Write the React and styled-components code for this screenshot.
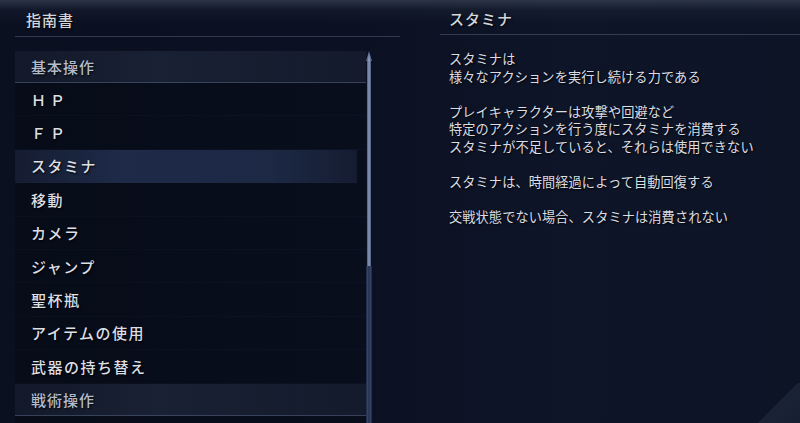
import React from "react";
import styled, { createGlobalStyle } from "styled-components";

const Global = createGlobalStyle`
  html, body { margin: 0; padding: 0; background: #0b1120; }
  body { font-family: "Noto Sans CJK JP", "Noto Sans", sans-serif; }
`;

const Screen = styled.div`
  position: relative;
  width: 800px;
  height: 423px;
  overflow: hidden;
  display: flex;
  background:
    linear-gradient(180deg, rgba(70,80,100,0.55) 0px, rgba(40,48,66,0.25) 10px, rgba(0,0,0,0) 24px),
    linear-gradient(90deg, #0a1020 0%, #0b1122 45%, #0e1528 70%, #0d1426 100%);
  color: #d6d9de;
  text-shadow: 1px 1px 2px rgba(0,0,0,0.9);
`;

const LeftPanel = styled.div`
  width: 400px;
  display: flex;
  flex-direction: column;
`;

const PanelTitle = styled.div`
  height: ${p => p.$h}px;
  margin-left: ${p => p.$ml}px;
  padding-left: ${p => p.$pl}px;
  box-sizing: border-box;
  display: flex;
  align-items: center;
  font-size: 15px;
  font-weight: 500;
  letter-spacing: 1px;
  color: #d2d5da;
  border-bottom: 1px solid rgba(90,100,125,0.5);
  padding-top: 2px;
`;

const ListArea = styled.div`
  display: flex;
  margin-top: 14px;
  flex: 1;
`;

const List = styled.div`
  margin-left: 15px;
  width: 351px;
  display: flex;
  flex-direction: column;
  background: linear-gradient(90deg, rgba(5,9,20,0.6), rgba(6,10,22,0.4));
`;

const Header = styled.div`
  height: ${p => p.$h}px;
  box-sizing: border-box;
  display: flex;
  align-items: center;
  padding-left: 16px;
  font-size: 15px;
  font-weight: 500;
  letter-spacing: 1px;
  color: #b4bccb;
  background: linear-gradient(90deg, rgba(30,38,58,0.5) 0%, rgba(28,36,56,0.85) 40%, rgba(24,32,50,0.7) 100%);
  border-bottom: 1px solid rgba(70,82,110,0.7);
`;

const Row = styled.div`
  height: 33.4px;
  box-sizing: border-box;
  display: flex;
  align-items: center;
  padding-left: 16px;
  margin-right: ${p => (p.$active ? 9 : 0)}px;
  font-size: 15px;
  font-weight: 500;
  letter-spacing: ${p => (p.$wide ? 4 : 1.5)}px;
  color: #dcdfe4;
  border-bottom: 1px solid rgba(40,48,68,0.12);
  background: ${p =>
    p.$active
      ? "linear-gradient(90deg, rgba(22,30,52,0.9) 0%, rgba(30,42,72,1) 30%, rgba(28,40,68,1) 75%, rgba(22,30,52,0.9) 100%)"
      : "transparent"};
`;

const Scroll = styled.div`
  width: 6px;
  display: flex;
  flex-direction: column;
  align-items: center;
`;

const ScrollArrow = styled.svg`
  display: block;
  width: 6px;
  height: 10px;
`;

const Thumb = styled.div`
  width: 4px;
  height: 205px;
  background: linear-gradient(90deg, #4a5a7c 0%, #8a9ab8 50%, #4a5a7c 100%);
`;

const Track = styled.div`
  width: 6px;
  flex: 1;
  background: linear-gradient(90deg, #1a2540 0%, #3a4a6c 30%, #1e2a46 50%, #3a4a6c 70%, #1a2540 100%);
`;

const RightPanel = styled.div`
  flex: 1;
  padding-left: 40px;
  display: flex;
  flex-direction: column;
`;

const Body = styled.div`
  padding-left: 9px;
  padding-top: 15px;
  font-size: 13.2px;
  line-height: 17.6px;
  color: #dadde2;
  letter-spacing: 0.1px;
`;

const Para = styled.p`
  margin: 0 0 17.6px 0;
`;

const Corner = styled.div`
  position: absolute;
  right: 0;
  bottom: 0;
  width: 46px;
  height: 40px;
  background: linear-gradient(135deg, rgba(0,0,0,0) 50%, rgba(50,60,82,0.35) 52%, rgba(45,55,78,0.3) 100%);
  pointer-events: none;
`;

const items = ["ＨＰ", "ＦＰ", "スタミナ", "移動", "カメラ", "ジャンプ", "聖杯瓶", "アイテムの使用", "武器の持ち替え"];

const paras = [
  ["スタミナは", "様々なアクションを実行し続ける力である"],
  ["プレイキャラクターは攻撃や回避など", "特定のアクションを行う度にスタミナを消費する", "スタミナが不足していると、それらは使用できない"],
  ["スタミナは、時間経過によって自動回復する"],
  ["交戦状態でない場合、スタミナは消費されない"],
];

export default function App() {
  return (
    <Screen>
      <Global />
      <LeftPanel>
        <PanelTitle $h={37} $ml={15} $pl={11}>指南書</PanelTitle>
        <ListArea>
          <List>
            <Header $h={32}>基本操作</Header>
            {items.map(t => (
              <Row key={t} $active={t === "スタミナ"} $wide={t.startsWith("Ｈ") || t.startsWith("Ｆ")}>
                {t}
              </Row>
            ))}
            <Header $h={32}>戦術操作</Header>
          </List>
          <Scroll>
            <ScrollArrow viewBox="0 0 6 10">
              <path d="M3 0 L6 10 L0 10 Z" fill="#5a6a8c" />
              <path d="M3 2 L4.2 10 L1.8 10 Z" fill="#8a9ab8" />
            </ScrollArrow>
            <Thumb />
            <Track />
          </Scroll>
        </ListArea>
      </LeftPanel>
      <RightPanel>
        <PanelTitle $h={35} $ml={0} $pl={9}>スタミナ</PanelTitle>
        <Body>
          {paras.map((p, i) => (
            <Para key={i}>
              {p.map((l, j) => (
                <React.Fragment key={j}>
                  {l}
                  {j < p.length - 1 && <br />}
                </React.Fragment>
              ))}
            </Para>
          ))}
        </Body>
      </RightPanel>
      <Corner />
    </Screen>
  );
}
